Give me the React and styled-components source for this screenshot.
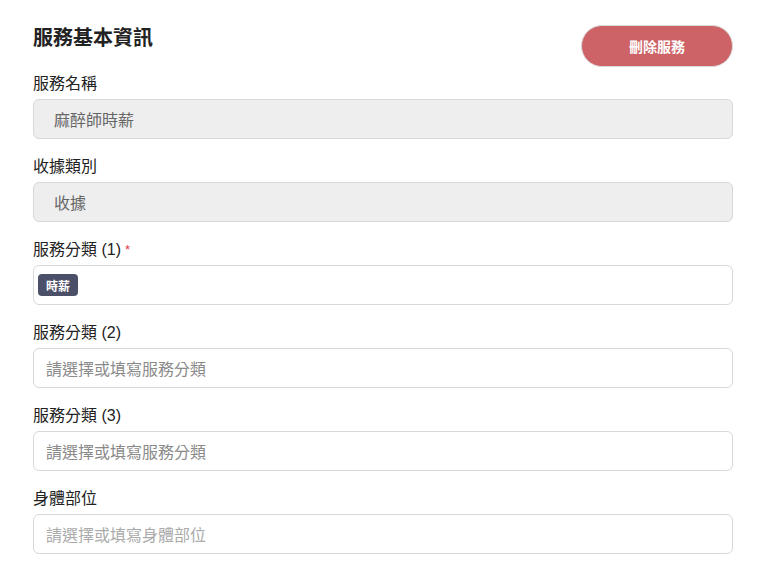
import React from "react";
import styled, { createGlobalStyle } from "styled-components";

const Global = createGlobalStyle`
  html, body { margin: 0; padding: 0; background: #fff; }
  body { font-family: "Liberation Sans", "Noto Sans CJK TC", sans-serif; color: #222; }
  * { box-sizing: border-box; }
`;

const Page = styled.div`
  padding: 25px 27px 0 33px;
  width: 760px;
`;

const Header = styled.div`
  display: flex;
  justify-content: space-between;
  align-items: flex-start;
  margin-bottom: 6px;
`;

const Title = styled.h2`
  margin: 0;
  font-size: 20px;
  line-height: 26px;
  font-weight: 700;
  color: #222;
`;

const DeleteButton = styled.button`
  width: 152px;
  height: 42px;
  border-radius: 21px;
  border: 1px solid #d9d9d9;
  background: #cd6366;
  color: #fff;
  font-family: inherit;
  font-size: 14px;
  font-weight: 700;
  cursor: pointer;
`;

const Field = styled.div`
  display: flex;
  flex-direction: column;
  margin-bottom: 17px;
`;

const Label = styled.label`
  font-size: 16px;
  line-height: 22px;
  margin-bottom: 4px;
  color: #222;
`;

const Required = styled.span`
  color: #e0364a;
  font-size: 13px;
  margin-left: 4px;
  vertical-align: top;
`;

const Box = styled.div`
  height: 40px;
  border: 1px solid #d8d8d8;
  border-radius: 6px;
  display: flex;
  align-items: center;
  gap: 4px;
  font-size: 16px;
  background: ${(p) => (p.$disabled ? "#eeeeee" : "#fff")};
  padding-left: ${(p) => (p.$disabled ? "20px" : p.$tags ? "4px" : "12px")};
  color: ${(p) => (p.$disabled ? "#666" : "#222")};
`;

const Placeholder = styled.span`
  color: ${(p) => (p.$light ? "#ababab" : "#8a8a8a")};
`;

const Tag = styled.span`
  height: 22px;
  padding: 0 8px;
  border-radius: 4px;
  background: #4b5068;
  color: #fff;
  font-size: 12px;
  font-weight: 700;
  display: inline-flex;
  align-items: center;
`;

export default function App() {
  return (
    <>
      <Global />
      <Page>
        <Header>
          <Title>服務基本資訊</Title>
          <DeleteButton>刪除服務</DeleteButton>
        </Header>
        <Field>
          <Label>服務名稱</Label>
          <Box $disabled>麻醉師時薪</Box>
        </Field>
        <Field>
          <Label>收據類別</Label>
          <Box $disabled>收據</Box>
        </Field>
        <Field>
          <Label>
            服務分類 (1)<Required>*</Required>
          </Label>
          <Box $tags>
            <Tag>時薪</Tag>
          </Box>
        </Field>
        <Field>
          <Label>服務分類 (2)</Label>
          <Box>
            <Placeholder>請選擇或填寫服務分類</Placeholder>
          </Box>
        </Field>
        <Field>
          <Label>服務分類 (3)</Label>
          <Box>
            <Placeholder>請選擇或填寫服務分類</Placeholder>
          </Box>
        </Field>
        <Field>
          <Label>身體部位</Label>
          <Box>
            <Placeholder $light>請選擇或填寫身體部位</Placeholder>
          </Box>
        </Field>
      </Page>
    </>
  );
}
